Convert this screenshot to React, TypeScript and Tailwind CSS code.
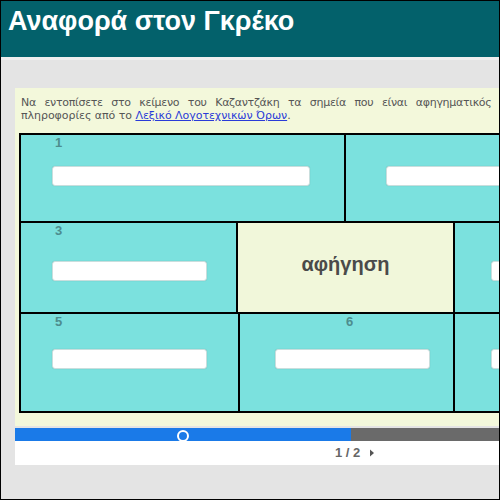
const FONT = { fontFamily: '"Liberation Sans", Arial, sans-serif' }

function Field({ w, ml }: { w: number; ml: number }) {
  return (
    <div
      className="h-[20px] rounded-[3px] bg-white border border-[#c9dedd] shadow-[0_0_1px_rgba(0,0,0,0.2)]"
      style={{ width: w, marginLeft: ml }}
    />
  )
}

function Cell({
  width,
  num,
  numLeft,
  fieldLeft,
  fieldWidth,
  fieldTop,
  last,
}: {
  width: number
  num?: string
  numLeft?: number
  fieldLeft: number
  fieldWidth: number
  fieldTop: number
  last?: boolean
}) {
  return (
    <div
      className={`shrink-0 bg-[#7be1de] ${last ? '' : 'border-r-2 border-black'}`}
      style={{ width }}
    >
      <div className="h-[14px] pt-[2px] text-[13px] leading-[12px] font-bold text-[#4d8d8e]" style={{ paddingLeft: numLeft }}>
        {num}
      </div>
      <div style={{ paddingTop: fieldTop }}>
        <Field w={fieldWidth} ml={fieldLeft} />
      </div>
    </div>
  )
}

export default function App() {
  return (
    <div className="w-[500px] h-[500px] overflow-hidden border border-black bg-[#e4e4e4]" style={FONT}>
      <div className="h-[56px] bg-[#03616b] pl-[7px] pt-[4px]">
        <h1 className="text-[27px] font-bold text-white leading-[32px] whitespace-nowrap">Αναφορά στον Γκρέκο</h1>
      </div>
      <div className="h-[3px] bg-[#efefef]" />
      <div className="pt-[28px] pl-[14px]">
        <div className="w-[560px]">
          <div className="bg-[#f3f8db] pt-[8px] pb-[13px]">
            <div
              className="px-[6px] text-[11px] leading-[13px] text-[#555]"
              style={{ fontFamily: '"DejaVu Sans", Verdana, sans-serif' }}
            >
              <p className="whitespace-nowrap" style={{ wordSpacing: '5.4px', letterSpacing: '-0.3px' }}>
                Να εντοπίσετε στο κείμενο του Καζαντζάκη τα σημεία που είναι αφηγηματικός λόγος, χρησιμοποιώντας τις
              </p>
              <p className="whitespace-nowrap" style={{ letterSpacing: '-0.05px' }}>
                πληροφορίες από το{' '}
                <a href="#" className="text-[#2a3bd8] underline">
                  Λεξικό Λογοτεχνικών Όρων
                </a>
                .
              </p>
            </div>
            <div className="ml-[4px] mt-[11px] border-2 border-black">
              <div className="flex h-[88px] border-b-2 border-black">
                <Cell width={325} num="1" numLeft={34} fieldLeft={31} fieldWidth={258} fieldTop={17} />
                <Cell width={240} fieldLeft={40} fieldWidth={200} fieldTop={17} last />
              </div>
              <div className="flex h-[91px] border-b-2 border-black">
                <Cell width={217} num="3" numLeft={34} fieldLeft={31} fieldWidth={155} fieldTop={24} />
                <div className="shrink-0 w-[217px] border-r-2 border-black bg-[#f1f7da] flex items-start justify-center pt-[26px]">
                  <span className="text-[20px] font-bold text-[#4a4a4a]">αφήγηση</span>
                </div>
                <Cell width={120} fieldLeft={36} fieldWidth={80} fieldTop={24} last />
              </div>
              <div className="flex h-[97px]">
                <Cell width={219} num="5" numLeft={34} fieldLeft={31} fieldWidth={155} fieldTop={21} />
                <div className="shrink-0 w-[215px] border-r-2 border-black bg-[#7be1de]">
                  <div className="h-[14px] pt-[2px] pl-[6px] text-[13px] leading-[12px] font-bold text-[#4d8d8e] text-center">6</div>
                  <div className="pt-[21px]">
                    <Field w={155} ml={35} />
                  </div>
                </div>
                <Cell width={120} fieldLeft={36} fieldWidth={80} fieldTop={21} last />
              </div>
            </div>
          </div>
          <div className="relative flex h-[13px] mt-[2px]">
            <div className="w-[336px] bg-[#1a7ae8]" />
            <div className="flex-1 bg-[#6a6a6a]" />
            <div className="absolute left-[162px] top-[2px] w-[12px] h-[12px] rounded-full border-2 border-white bg-[#1a7ae8]" />
          </div>
          <div className="h-[24px] bg-white flex items-center">
            <div className="ml-[320px] flex items-center text-[13px] font-bold text-[#666]">
              <span>1 / 2</span>
              <svg width="6" height="8" viewBox="0 0 6 8" className="ml-[9px]">
                <path d="M1 0.5 L5 4 L1 7.5 Z" fill="#555" />
              </svg>
            </div>
          </div>
        </div>
      </div>
    </div>
  )
}
